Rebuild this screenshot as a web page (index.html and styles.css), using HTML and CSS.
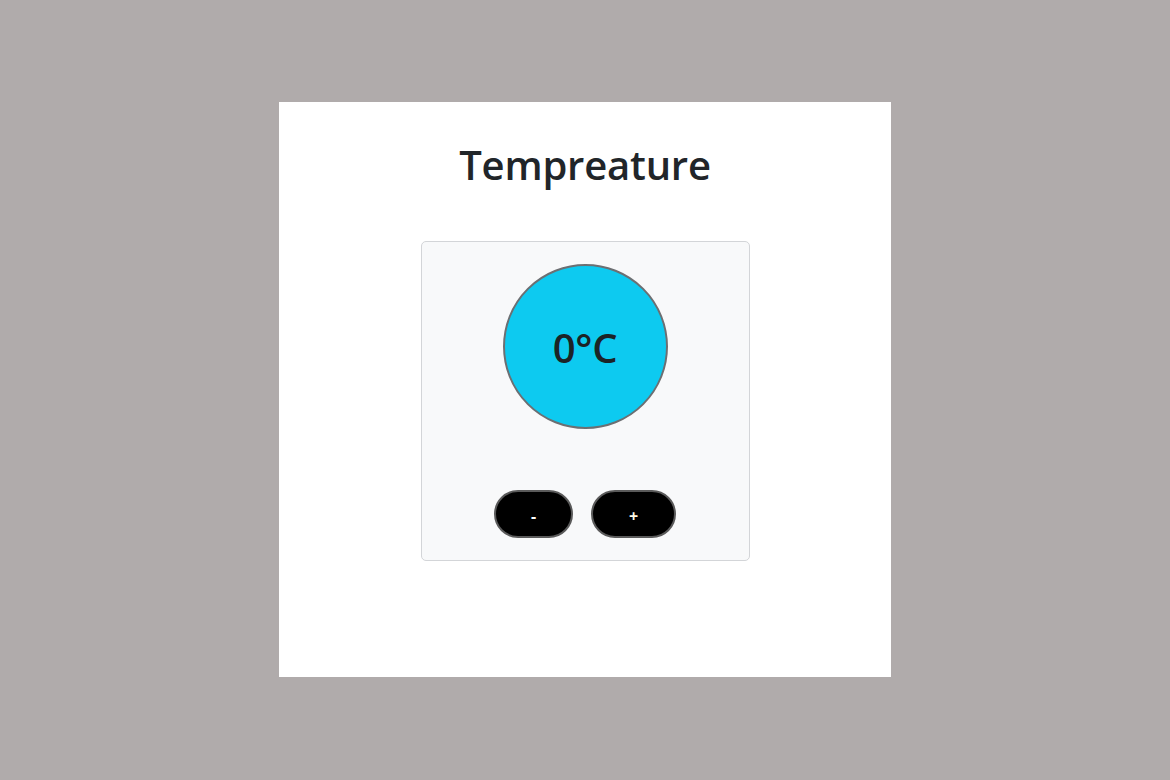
FILE: index.html
```html
<!DOCTYPE html>
<html lang="en">
<head>
<meta charset="utf-8">
<title>Tempreature</title>
<link rel="stylesheet" href="styles.css">
</head>
<body>
<main class="card">
  <h1 class="title">Tempreature</h1>
  <section class="panel">
    <div class="dial"><span class="reading">0°C</span></div>
    <div class="controls">
      <button class="btn btn-minus" type="button">-</button>
      <button class="btn btn-plus" type="button">+</button>
    </div>
  </section>
</main>
</body>
</html>
```

FILE: styles.css
```css
* { box-sizing: border-box; }
html, body { height: 100%; }
body {
  margin: 0;
  background: #b0abab;
  display: flex;
  align-items: center;
  justify-content: center;
  font-family: "Open Sans", "Noto Sans", sans-serif;
  color: #212529;
}
.card {
  width: 612px;
  height: 575px;
  background: #fff;
  display: flex;
  flex-direction: column;
  align-items: center;
  padding-top: 39px;
  margin-top: -1px;
}
.title {
  margin: 0;
  font-size: 40px;
  line-height: 48px;
  font-weight: 600;
  letter-spacing: -0.2px;
}
.panel {
  margin-top: 52px;
  width: 329px;
  height: 320px;
  background: #f8f9fa;
  border: 1px solid #d3d5d8;
  border-radius: 5px;
  display: flex;
  flex-direction: column;
  align-items: center;
  padding-top: 22px;
}
.dial {
  width: 165px;
  height: 165px;
  border-radius: 50%;
  background: #0dcaf0;
  border: 2px solid #6c6f72;
  display: flex;
  align-items: center;
  justify-content: center;
}
.reading {
  font-size: 40px;
  font-weight: 600;
  color: #1c2326;
  letter-spacing: -0.3px;
  margin-top: 2px;
}
.controls {
  margin-top: 61px;
  display: flex;
  gap: 18px;
}
.btn {
  height: 48px;
  background: #000;
  color: #fff;
  border: 2px solid #5a5a5a;
  border-radius: 24px;
  font-family: "Open Sans", sans-serif;
  font-weight: 700;
  font-size: 16px;
  padding: 3px 0 0;
  cursor: pointer;
}
.btn-minus { width: 79px; }
.btn-plus { width: 85px; color: #fffbe6; }
```
